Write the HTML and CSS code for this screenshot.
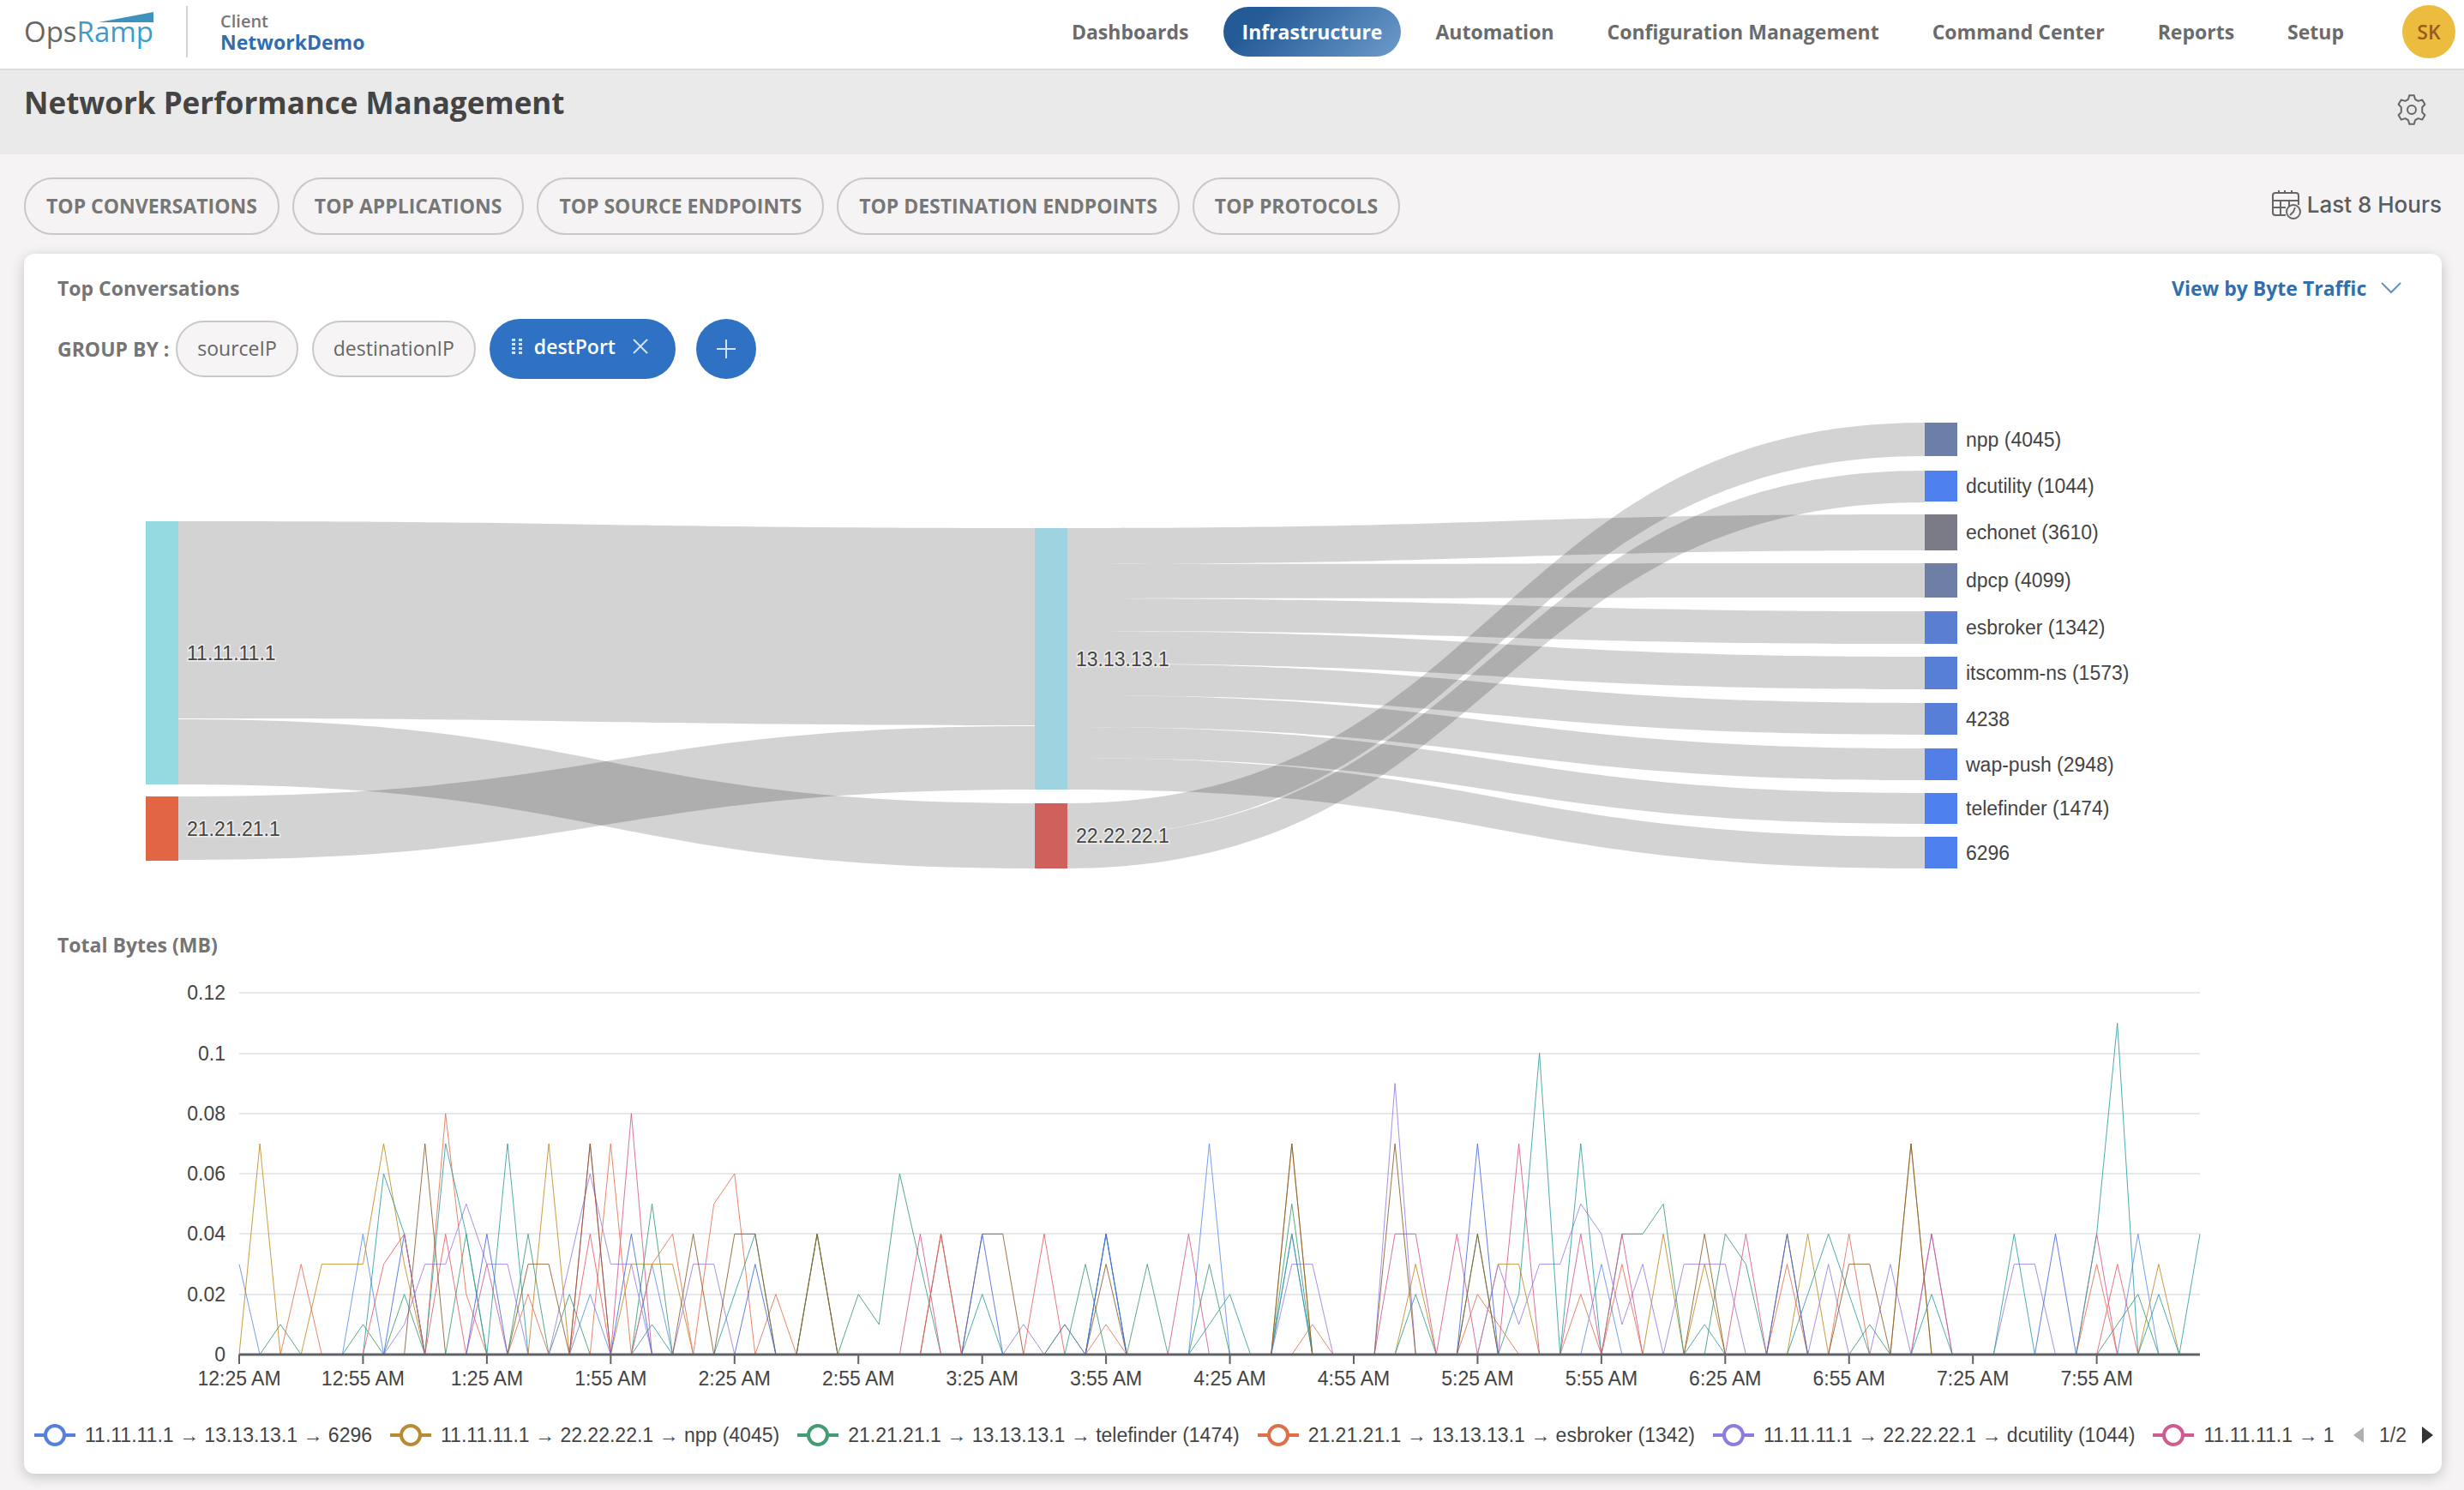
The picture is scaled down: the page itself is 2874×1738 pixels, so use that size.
FILE: index.html
```html
<!DOCTYPE html>
<html lang="en">
<head>
<meta charset="utf-8">
<title>Network Performance Management</title>
<link rel="stylesheet" href="styles.css">
</head>
<body>
<header class="topbar">
  <a class="logo" href="#" aria-label="OpsRamp">
    <span class="logo-ops">Ops</span><span class="logo-ramp">Ramp</span>
    <svg class="logo-wedge" viewBox="0 0 64 12" aria-hidden="true"><path d="M0 12 64 0v12z" fill="#3d93bd"/></svg>
  </a>
  <div class="client">
    <span class="client-label">Client</span>
    <a class="client-name" href="#">NetworkDemo</a>
  </div>
  <nav class="nav">
    <a href="#">Dashboards</a>
    <a href="#" class="active">Infrastructure</a>
    <a href="#">Automation</a>
    <a href="#">Configuration Management</a>
    <a href="#">Command Center</a>
    <a href="#">Reports</a>
    <a href="#">Setup</a>
  </nav>
  <button class="avatar" type="button">SK</button>
</header>

<div class="titlebar">
  <h1>Network Performance Management</h1>
  <button class="icon-button" type="button" aria-label="Settings">
    <svg width="36" height="36" viewBox="0 0 36 36" fill="none" stroke="#666" stroke-width="2" stroke-linejoin="round">
      <path d="M15.200 1.200h5.600l1.200 4.600 3.600 2.100 4.700-1.500 3.100 5.300-3.200 3.400v5.800l3.200 3.400-3.100 5.300-4.700-1.500-3.600 2.100-1.200 4.600h-5.600l-1.200-4.600-3.600-2.100-4.700 1.500-3.100-5.300 3.200-3.400v-5.800l-3.200-3.400 3.100-5.300 4.700 1.500 3.600-2.100z"/>
      <circle cx="18" cy="18" r="5"/>
    </svg>
  </button>
</div>

<main class="page">
  <div class="toolbar">
    <div class="tabs">
      <button type="button">TOP CONVERSATIONS</button>
      <button type="button">TOP APPLICATIONS</button>
      <button type="button">TOP SOURCE ENDPOINTS</button>
      <button type="button">TOP DESTINATION ENDPOINTS</button>
      <button type="button">TOP PROTOCOLS</button>
    </div>
    <button class="range" type="button">
      <svg width="35" height="34" viewBox="0 0 35 34" fill="none" stroke="#666" stroke-width="2">
        <path d="M17 29H5a3 3 0 0 1-3-3V6a3 3 0 0 1 3-3h24a3 3 0 0 1 3 3v11M2 12h30M2 20h15M11 12v17M21 12v7M9 0v4M16 0v4M24 0v4"/>
        <circle cx="26" cy="25" r="8"/>
        <path d="M28 20l-2 5-4 4"/>
      </svg>
      <span>Last 8 Hours</span>
    </button>
  </div>

  <section class="card">
    <div class="card-head">
      <h2>Top Conversations</h2>
      <label class="view-by">
        <select aria-label="View by"><option>View by Byte Traffic</option></select>
        <svg width="24" height="14" viewBox="0 0 24 14" fill="none" stroke="#5f93c0" stroke-width="2"><path d="M1 1l11 11L23 1"/></svg>
      </label>
    </div>

    <div class="group-row">
      <span class="group-label">GROUP BY :</span>
      <button class="chip" type="button">sourceIP</button>
      <button class="chip" type="button">destinationIP</button>
      <div class="chip-active">
        <svg width="12" height="18" viewBox="0 0 12 18" fill="#cfe2f7"><path d="M0 0h4v3H0zM8 0h4v3H8zM0 5h4v3H0zM8 5h4v3H8zM0 10h4v3H0zM8 10h4v3H8zM0 15h4v3H0zM8 15h4v3H8z"/></svg>
        <span>destPort</span>
        <button type="button" aria-label="Remove destPort">
          <svg width="18" height="18" viewBox="0 0 18 18" stroke="#cfe2f7" stroke-width="2"><path d="M1 1l16 16M17 1 1 17"/></svg>
        </button>
      </div>
      <button class="add" type="button" aria-label="Add group">
        <svg width="24" height="24" viewBox="0 0 24 24" stroke="#cfe2f7" stroke-width="2"><path d="M12 1v22M1 12h22"/></svg>
      </button>
    </div>

    <svg class="chart sankey" id="sankey" viewBox="0 0 2820 560" role="img" aria-label="Conversation flow"></svg>

    <h2 class="chart-title">Total Bytes (MB)</h2>
    <svg class="chart" id="bytes" viewBox="0 0 2820 510" role="img" aria-label="Total bytes over time"></svg>

    <div class="legend">
      <button type="button" class="c-blue"><i></i>11.11.11.1 → 13.13.13.1 → 6296</button>
      <button type="button" class="c-ochre"><i></i>11.11.11.1 → 22.22.22.1 → npp (4045)</button>
      <button type="button" class="c-green"><i></i>21.21.21.1 → 13.13.13.1 → telefinder (1474)</button>
      <button type="button" class="c-orange"><i></i>21.21.21.1 → 13.13.13.1 → esbroker (1342)</button>
      <button type="button" class="c-purple"><i></i>11.11.11.1 → 22.22.22.1 → dcutility (1044)</button>
      <button type="button" class="c-pink"><i></i>11.11.11.1 → 1</button>
      <div class="pager">
        <button type="button" aria-label="Previous page" disabled><svg width="12" height="18" viewBox="0 0 12 18"><path d="M12 0v18L0 9z" fill="#b0b0b0"/></svg></button>
        <span>1/2</span>
        <button type="button" aria-label="Next page"><svg width="13" height="20" viewBox="0 0 13 20"><path d="M0 0v20l13-10z" fill="#333"/></svg></button>
      </div>
    </div>
  </section>
</main>
<script src="charts.js"></script>
</body>
</html>
```
FILE: styles.css
```css
*, *::before, *::after { box-sizing: border-box; }

body {
  margin: 0;
  background: #f5f3f4;
  color: #666;
  font-family: "Open Sans", "Noto Sans", sans-serif;
  font-size: 23px;
}

button, select {
  margin: 0;
  padding: 0;
  border: 0;
  background: none;
  color: inherit;
  font: inherit;
  cursor: pointer;
}

a { color: inherit; text-decoration: none; }
svg { display: block; }
h1, h2 { margin: 0; }

.topbar {
  display: flex;
  align-items: center;
  height: 82px;
  padding: 0 10px 6px 28px;
  background: #fff;
  border-bottom: 2px solid #dcdcdc;
}

.logo {
  position: relative;
  display: flex;
  padding-right: 38px;
  border-right: 2px solid #d4d4d4;
  font-size: 33px;
  line-height: 60px;
  font-weight: 400;
}
.logo-ops { color: #666; }
.logo-ramp { color: #3f9cc8; }
.logo-wedge {
  position: absolute;
  top: 7px;
  right: 38px;
  width: 64px;
  height: 12px;
}

.client {
  display: flex;
  flex-direction: column;
  padding-left: 38px;
  line-height: 24px;
}
.client-label { font-size: 20px; font-weight: 600; color: #777; }
.client-name { font-weight: 700; color: #2f6db0; }

.nav {
  display: flex;
  gap: 18px;
  margin-left: auto;
  font-weight: 700;
  color: #6b6b6b;
}
.nav a { padding: 0 22px; line-height: 58px; border-radius: 29px; }
.nav .active {
  color: #fff;
  background: linear-gradient(135deg, #245a96 20%, #6d9bcb);
}

.avatar {
  width: 62px;
  height: 62px;
  margin-left: 46px;
  border-radius: 50%;
  background: #ebbc3e;
  color: #9b5a1e;
  font-weight: 600;
}

.titlebar {
  display: flex;
  justify-content: space-between;
  align-items: center;
  height: 98px;
  padding: 0 43px 6px 28px;
  background: #eaeaea;
}
h1 {
  padding-bottom: 16px;
  color: #444;
  font-size: 35px;
  line-height: 46px;
  font-weight: 700;
}

.page { padding: 27px 26px 18px 28px; }

.toolbar {
  display: flex;
  justify-content: space-between;
  align-items: center;
  margin-bottom: 22px;
}
.tabs { display: flex; gap: 15px; }
.tabs button {
  height: 67px;
  padding: 0 24px 2px;
  border: 2px solid #c9c7c8;
  border-radius: 34px;
  color: #777;
  font-weight: 700;
}
.range {
  display: flex;
  align-items: center;
  gap: 7px;
  padding-bottom: 4px;
  color: #5c5c5c;
  font-family: Inter, sans-serif;
  font-size: 26px;
  font-weight: 500;
}

.card {
  padding: 22px 0 10px;
  border-radius: 12px;
  background: #fff;
  box-shadow: 0 4px 16px rgba(0, 0, 0, .2);
}
.card-head {
  display: flex;
  justify-content: space-between;
  align-items: center;
  height: 36px;
  padding: 0 47px 0 39px;
}
h2 { color: #757575; font-size: 23px; line-height: 32px; font-weight: 700; }
.view-by { display: flex; align-items: center; gap: 16px; }
.view-by select {
  appearance: none;
  color: #2f6fae;
  font-weight: 700;
}

.group-row {
  display: flex;
  align-items: center;
  gap: 16px;
  margin: 18px 39px 37px;
}
.group-label { margin-right: -8px; color: #757575; font-weight: 700; }
.chip {
  height: 66px;
  padding: 0 23px 2px;
  border: 2px solid #c9c7c8;
  border-radius: 33px;
  background: #f6f4f5;
}
.chip-active {
  display: flex;
  align-items: center;
  height: 70px;
  padding: 0 32px 6px 26px;
  border-radius: 35px;
  background: #2f72c4;
  color: #fff;
  font-weight: 600;
}
.chip-active span { margin: 0 20px 0 14px; }
.add {
  display: grid;
  place-items: center;
  width: 70px;
  height: 70px;
  margin-left: 8px;
  border-radius: 50%;
  background: #2f72c4;
}

.chart {
  width: 100%;
  height: auto;
  font-family: "Liberation Sans", Arial, sans-serif;
  font-size: 23px;
  fill: #444;
}
.sankey .halo { stroke: #fff; stroke-opacity: .6; stroke-width: 3; paint-order: stroke; }
.sankey .link { fill: #000; fill-opacity: .173; }
.chart-title { margin: 47px 39px 11px; }
.grid { stroke: #e6e8ec; stroke-width: 2; }
.axis { stroke: #5f6368; stroke-width: 3; }
.tick { stroke: #5f6368; stroke-width: 2; }
.series { fill: none; stroke-width: 1; stroke-opacity: .85; stroke-linejoin: bevel; }
.end { text-anchor: end; }
.middle { text-anchor: middle; }

.legend {
  display: flex;
  align-items: center;
  gap: 21px;
  height: 70px;
  padding: 0 10px 0 12px;
  color: #444;
  font-family: "Liberation Sans", Arial, sans-serif;
  white-space: nowrap;
}
.legend > button { display: flex; align-items: center; gap: 11px; }
.legend i {
  display: grid;
  place-items: center;
  width: 48px;
  height: 26px;
  background: linear-gradient(currentColor, currentColor) center / 100% 4px no-repeat;
}
.legend i::after {
  content: "";
  width: 26px;
  height: 26px;
  border: 4px solid currentColor;
  border-radius: 50%;
  background: #fff;
}
.c-blue i { color: #5580dd; }
.c-ochre i { color: #b88a32; }
.c-green i { color: #439c74; }
.c-orange i { color: #dd7048; }
.c-purple i { color: #8f7bdd; }
.c-pink i { color: #ce5c90; }
.pager { display: flex; align-items: center; gap: 18px; margin-left: auto; }
```
FILE: charts.js
```js
const NS = 'http://www.w3.org/2000/svg';
function add(svg, name, attrs, text) {
  const el = document.createElementNS(NS, name);
  for (const key in attrs) el.setAttribute(key, attrs[key]);
  if (text) el.textContent = text;
  svg.appendChild(el);
}

/* Flow between source, destination and port */
const sankey = document.getElementById('sankey');
const W = 38, COL = [142, 1179, 2217];
const nodes = [
  [0, 129, 307, '#94dae0', '11.11.11.1'],
  [0, 450, 75, '#e26544', '21.21.21.1'],
  [1, 137, 305, '#9fd3df', '13.13.13.1'],
  [1, 458, 76, '#d0605c', '22.22.22.1'],
  [2, 14, 39, '#6b7fa9', 'npp (4045)'],
  [2, 70, 36, '#4f80ef', 'dcutility (1044)'],
  [2, 121, 42, '#7b7b88', 'echonet (3610)'],
  [2, 178, 40, '#6f7ea5', 'dpcp (4099)'],
  [2, 234, 38, '#5b7fd0', 'esbroker (1342)'],
  [2, 287, 38, '#587fd6', 'itscomm-ns (1573)'],
  [2, 341, 37, '#587fd8', '4238'],
  [2, 394, 37, '#527fe5', 'wap-push (2948)'],
  [2, 446, 36, '#4f80ef', 'telefinder (1474)'],
  [2, 497, 37, '#4f80f0', '6296']
];
/* source node, target node, source y, target y, thickness */
const links = [
  [0, 2, 129, 137, 230], [0, 3, 360, 458, 76], [1, 2, 450, 368, 74],
  [3, 4, 458, 14, 39], [3, 5, 497, 70, 37]
];
let y = 137;
for (let i = 6; i < nodes.length; i++) {
  links.push([2, i, y, nodes[i][1], nodes[i][2]]);
  y += nodes[i][2];
}
for (const [s, t, y0, y1, h] of links) {
  const x0 = COL[nodes[s][0]] + W, x1 = COL[nodes[t][0]], m = (x0 + x1) / 2;
  add(sankey, 'path', {
    class: 'link',
    d: `M${x0} ${y0}C${m} ${y0} ${m} ${y1} ${x1} ${y1}V${y1 + h}C${m} ${y1 + h} ${m} ${y0 + h} ${x0} ${y0 + h}Z`
  });
}
for (const [c, top, h, fill, label] of nodes) {
  add(sankey, 'rect', { x: COL[c], y: top, width: W, height: h, fill });
  add(sankey, 'text', { x: COL[c] + W + 10, y: top + h / 2 + 8, class: c < 2 ? 'halo' : '' }, label);
}

/* Bytes per five minutes */
const bytes = document.getElementById('bytes');
const X0 = 251, X1 = 2538, Y0 = 451, STEP = (X1 - X0) / 95, UNIT = 35.15;
['0', '0.02', '0.04', '0.06', '0.08', '0.1', '0.12'].forEach((label, i) => {
  const gy = Math.round(Y0 - i * 2 * UNIT);
  if (i) add(bytes, 'path', { class: 'grid', d: `M${X0} ${gy}H${X1}` });
  add(bytes, 'text', { class: 'end', x: X0 - 16, y: gy + 8 }, label);
});
/* index, hundredths of a MB */
const series = [
  ['#5b8def', [[0,3],[6,4],[17,2],[20,3],[42,4],[47,7],[51,4],[66,3],[92,4]]],
  ['#c08a1e', [[1,7],[4,3],[5,3],[6,3],[7,7],[8,3],[15,7],[19,3],[20,3],[21,3],[28,4],[51,7],[57,3],[61,3],[62,3],[69,4],[71,3],[76,4],[81,7],[93,3]]],
  ['#3a9b73', [[2,1],[6,1],[8,2],[11,4],[14,4],[16,2],[20,5],[28,4],[30,2],[31,1],[32,6],[33,3],[41,3],[44,3],[47,3],[51,5],[60,4],[67,4],[68,4],[69,5],[72,4],[73,3],[79,1],[91,1],[92,2]]],
  ['#e8704f', [[3,3],[10,8],[11,2],[14,2],[18,7],[20,3],[21,4],[23,5],[24,6],[26,2],[42,1],[52,1],[60,2],[61,1],[65,2],[67,3],[75,3],[78,4],[90,3]]],
  ['#9a7be8', [[8,1],[9,3],[10,3],[11,5],[12,3],[13,3],[16,3],[17,6],[18,3],[19,3],[22,3],[23,3],[38,1],[51,3],[52,3],[56,9],[61,3],[62,1],[63,3],[64,3],[65,5],[66,4],[67,1],[68,3],[70,3],[71,3],[72,3],[77,3],[80,3],[82,4],[86,3],[87,3]]],
  ['#d6588f', [[12,3],[17,7],[19,8],[33,4],[40,1],[46,4],[56,4],[57,4],[59,4],[62,7],[65,4],[67,4],[73,4],[82,4],[90,4]]],
  ['#2f9e9e', [[7,6],[8,4],[10,7],[11,4],[13,7],[20,1],[24,2],[25,4],[36,2],[40,1],[42,4],[47,1],[48,2],[51,4],[57,2],[62,2],[63,10],[65,7],[71,1],[76,2],[77,4],[78,2],[82,2],[86,4],[90,4],[91,11],[93,2],[95,4]]],
  ['#8a5a2a', [[9,7],[14,3],[15,3],[17,7],[22,4],[24,4],[25,4],[28,4],[34,4],[36,4],[37,4],[42,3],[51,7],[56,7],[60,4],[71,4],[75,4],[78,3],[79,3],[81,7]]],
  ['#4468e0', [[8,4],[12,4],[19,4],[25,3],[36,4],[42,4],[60,7],[75,4],[88,4]]],
  ['#e85d65', [[7,3],[8,4],[10,4],[17,4],[34,4],[39,4],[91,3]]]
];
for (const [stroke, points] of series) {
  const values = Array(96).fill(0);
  for (const [i, v] of points) values[i] = v;
  add(bytes, 'polyline', {
    class: 'series', stroke,
    points: values.map((v, i) => `${(X0 + i * STEP).toFixed(1)},${(Y0 - v * UNIT).toFixed(1)}`).join(' ')
  });
}
add(bytes, 'path', { class: 'axis', d: `M${X0} ${Y0}H${X1}` });
for (let i = 0; i < 16; i++) {
  const x = X0 + i * 6 * STEP, minutes = 25 + i * 30;
  const hour = Math.floor(minutes / 60) || 12;
  add(bytes, 'path', { class: 'tick', d: `M${x} ${Y0}v11` });
  add(bytes, 'text', { class: 'middle', x, y: Y0 + 36 }, `${hour}:${minutes % 60} AM`);
}
```
